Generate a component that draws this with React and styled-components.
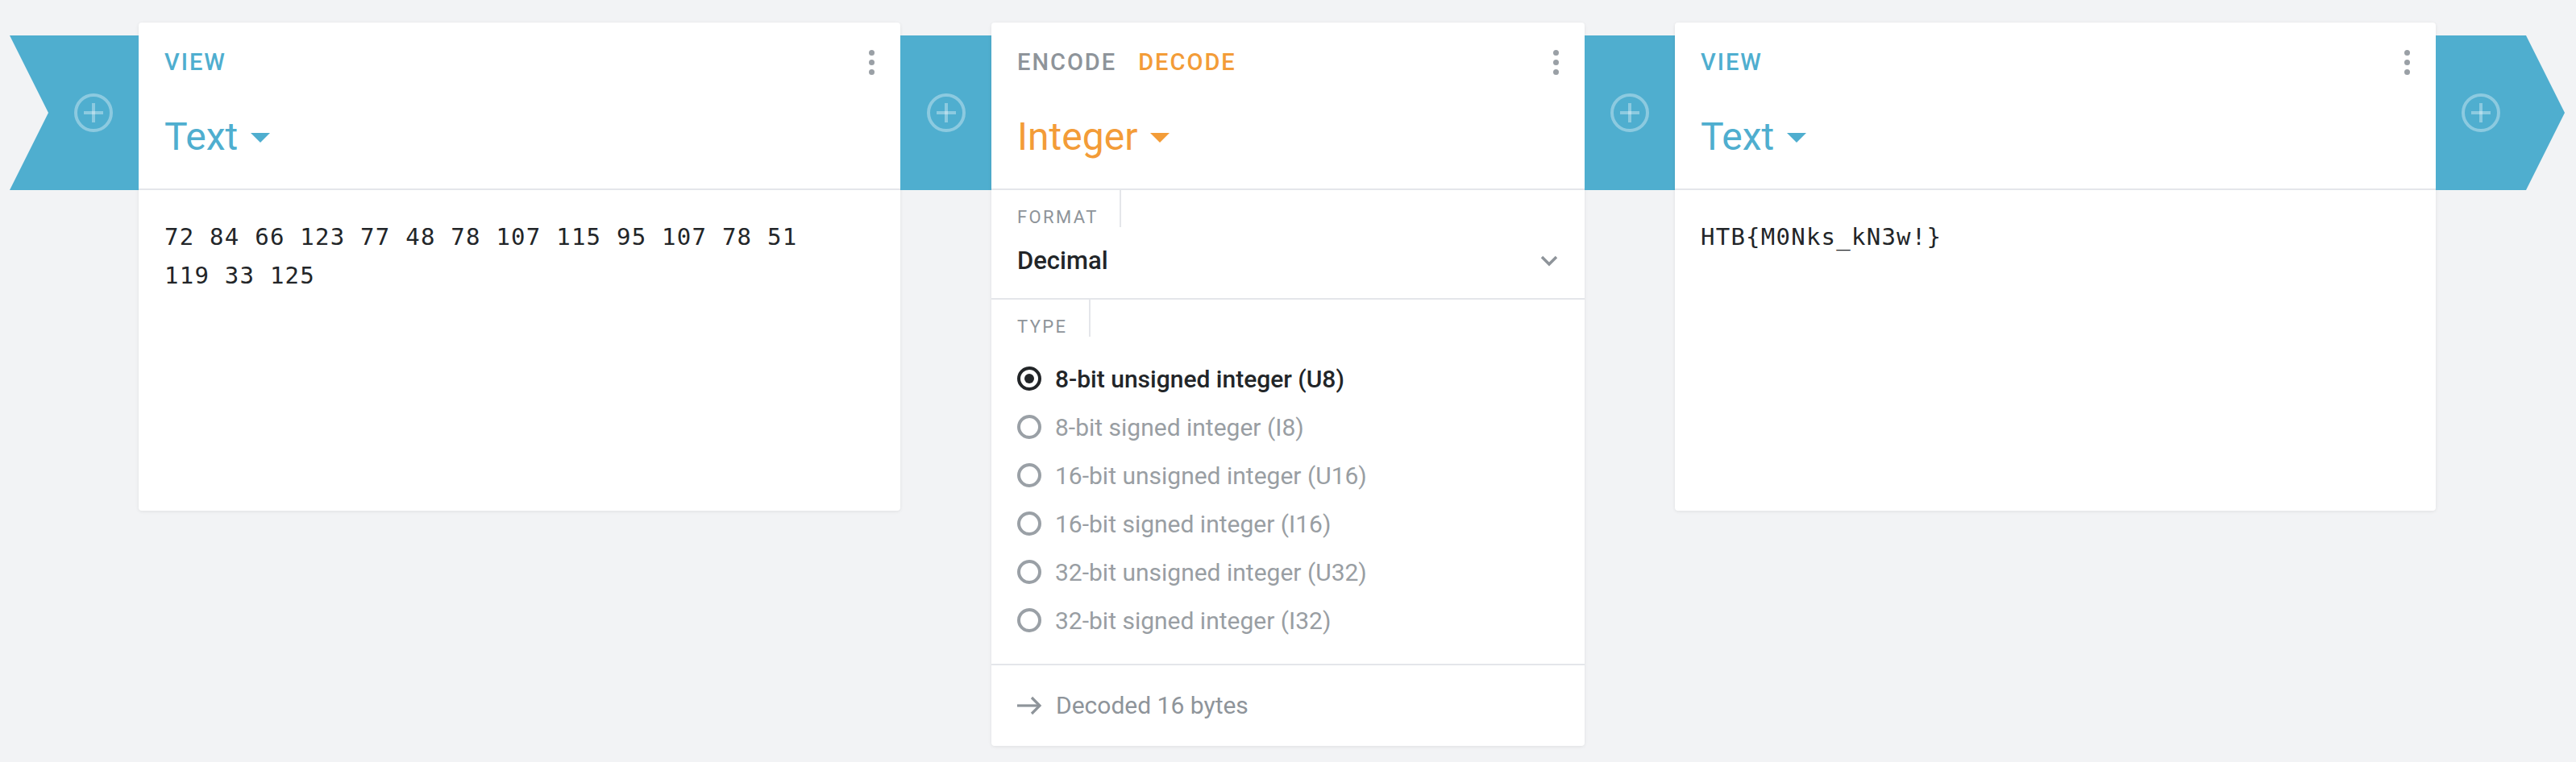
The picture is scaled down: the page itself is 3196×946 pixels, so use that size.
import React from 'react';
import styled, { createGlobalStyle } from 'styled-components';

const BLUE = '#4faecf';
const ORANGE = '#f39c38';
const GREY = '#8e949a';
const DARK = '#222528';
const LINE = '#e4e6ea';

const GlobalStyle = createGlobalStyle`
    html, body {
        margin: 0;
        padding: 0;
        background: #f2f3f5;
    }
    body {
        font-family: Roboto, "Noto Sans", Arial, sans-serif;
        -webkit-font-smoothing: antialiased;
    }
`;

const Pipeline = styled.div`
    display: flex;
    align-items: flex-start;
    padding: 28px 0 0 12px;
    min-height: 946px;
    box-sizing: border-box;
`;

const Connector = styled.div`
    flex-shrink: 0;
    width: ${(p) => p.$width}px;
    height: 192px;
    margin-top: 16px;
    background: ${BLUE};
    display: flex;
    align-items: center;
    justify-content: center;
    box-sizing: border-box;
    padding-left: ${(p) => (p.$shape === 'start' ? 48 : 0)}px;
    padding-right: ${(p) => (p.$shape === 'end' ? 48 : 0)}px;
    clip-path: ${(p) =>
        p.$shape === 'start'
            ? 'polygon(0 0, 100% 0, 100% 100%, 0 100%, 48px 50%)'
            : p.$shape === 'end'
            ? 'polygon(0 0, 112px 0, 100% 50%, 112px 100%, 0 100%)'
            : 'none'};
`;

const Card = styled.div`
    flex-shrink: 0;
    width: ${(p) => p.$width}px;
    background: #ffffff;
    border-radius: 4px;
    box-shadow: 0 1px 4px rgba(0, 0, 0, 0.08);
    display: flex;
    flex-direction: column;
`;

const Header = styled.div`
    height: 206px;
    border-bottom: 2px solid ${LINE};
    padding: 31px 32px 0 32px;
    box-sizing: content-box;
    height: 175px;
`;

const HeaderTop = styled.div`
    display: flex;
    align-items: center;
    justify-content: space-between;
    height: 36px;
`;

const Modes = styled.div`
    display: flex;
    gap: 27px;
`;

const Mode = styled.span`
    font-size: 29px;
    line-height: 36px;
    font-weight: 500;
    letter-spacing: 2px;
    color: ${(p) => p.$color};
`;

const Kebab = styled.div`
    display: flex;
    flex-direction: column;
    gap: 5px;
    span {
        width: 7px;
        height: 7px;
        border-radius: 50%;
        background: #9aa0a6;
    }
`;

const Title = styled.div`
    margin-top: 47px;
    display: flex;
    align-items: center;
    gap: 16px;
    font-size: 48px;
    line-height: 56px;
    color: ${(p) => p.$color};
`;

const Caret = styled.span`
    width: 0;
    height: 0;
    border-left: 12px solid transparent;
    border-right: 12px solid transparent;
    border-top: 12px solid currentColor;
    margin-top: 2px;
`;

const Content = styled.div`
    min-height: 398px;
    box-sizing: border-box;
    padding: 34px 64px 32px 32px;
    font-family: "DejaVu Sans Mono", "Liberation Mono", monospace;
    font-size: 29px;
    letter-spacing: 1.24px;
    line-height: 48px;
    color: ${DARK};
    word-wrap: break-word;
`;

const Field = styled.div`
    padding: 0 32px;
    border-bottom: 2px solid ${LINE};
    height: ${(p) => p.$height}px;
    box-sizing: content-box;
`;

const FieldLabel = styled.div`
    display: inline-block;
    padding: 22px 26px 0 0;
    border-right: 2px solid ${LINE};
    font-size: 22px;
    line-height: 24px;
    letter-spacing: 2.4px;
    color: ${GREY};
`;

const SelectRow = styled.div`
    margin-top: 22px;
    display: flex;
    align-items: center;
    justify-content: space-between;
    font-size: 31px;
    line-height: 40px;
    font-weight: 500;
    color: ${DARK};
    svg {
        margin-right: 1px;
    }
`;

const RadioList = styled.div`
    margin-top: 22px;
    display: flex;
    flex-direction: column;
`;

const RadioRow = styled.label`
    display: flex;
    align-items: center;
    gap: 17px;
    height: 60px;
    font-size: 30px;
    font-weight: ${(p) => (p.$checked ? 500 : 400)};
    color: ${(p) => (p.$checked ? DARK : '#999ea3')};
`;

const RadioMark = styled.span`
    width: 30px;
    height: 30px;
    box-sizing: border-box;
    border-radius: 50%;
    border: 4px solid ${(p) => (p.$checked ? DARK : '#9aa0a6')};
    display: flex;
    align-items: center;
    justify-content: center;
    &::after {
        content: '';
        width: 12px;
        height: 12px;
        border-radius: 50%;
        background: ${DARK};
        display: ${(p) => (p.$checked ? 'block' : 'none')};
    }
`;

const Status = styled.div`
    display: flex;
    align-items: center;
    gap: 17px;
    padding: 30px 32px;
    font-size: 30px;
    line-height: 40px;
    color: ${GREY};
`;

const PlusIcon = () => (
    <svg width="48" height="48" viewBox="0 0 48 48" fill="none" stroke="rgba(255,255,255,0.35)" strokeWidth="4">
        <circle cx="24" cy="24" r="22" />
        <line x1="12" y1="24" x2="36" y2="24" />
        <line x1="24" y1="12" x2="24" y2="36" />
    </svg>
);

const Chevron = () => (
    <svg width="22" height="14" viewBox="0 0 22 14" fill="none" stroke="#8e949a" strokeWidth="3.5">
        <polyline points="2,2 11,11 20,2" />
    </svg>
);

const Arrow = () => (
    <svg width="31" height="24" viewBox="0 0 31 24" fill="none" stroke="#8e949a" strokeWidth="3.2">
        <line x1="0" y1="12" x2="28" y2="12" />
        <polyline points="18,2 28,12 18,22" />
    </svg>
);

const Menu = () => (
    <Kebab>
        <span />
        <span />
        <span />
    </Kebab>
);

const types = [
    '8-bit unsigned integer (U8)',
    '8-bit signed integer (I8)',
    '16-bit unsigned integer (U16)',
    '16-bit signed integer (I16)',
    '32-bit unsigned integer (U32)',
    '32-bit signed integer (I32)',
];

const App = () => {
    return (
        <>
            <GlobalStyle />
            <Pipeline>
                <Connector $shape="start" $width={160}>
                    <PlusIcon />
                </Connector>

                <Card $width={945}>
                    <Header>
                        <HeaderTop>
                            <Mode $color={BLUE}>VIEW</Mode>
                            <Menu />
                        </HeaderTop>
                        <Title $color={BLUE}>
                            Text <Caret />
                        </Title>
                    </Header>
                    <Content>72 84 66 123 77 48 78 107 115 95 107 78 51 119 33 125</Content>
                </Card>

                <Connector $width={113}>
                    <PlusIcon />
                </Connector>

                <Card $width={736}>
                    <Header>
                        <HeaderTop>
                            <Modes>
                                <Mode $color={GREY}>ENCODE</Mode>
                                <Mode $color={ORANGE}>DECODE</Mode>
                            </Modes>
                            <Menu />
                        </HeaderTop>
                        <Title $color={ORANGE}>
                            Integer <Caret />
                        </Title>
                    </Header>
                    <Field $height={134}>
                        <FieldLabel>FORMAT</FieldLabel>
                        <SelectRow>
                            Decimal
                            <Chevron />
                        </SelectRow>
                    </Field>
                    <Field $height={452}>
                        <FieldLabel>TYPE</FieldLabel>
                        <RadioList>
                            {types.map((t, i) => (
                                <RadioRow key={t} $checked={i === 0}>
                                    <RadioMark $checked={i === 0} />
                                    {t}
                                </RadioRow>
                            ))}
                        </RadioList>
                    </Field>
                    <Status>
                        <Arrow />
                        Decoded 16 bytes
                    </Status>
                </Card>

                <Connector $width={112}>
                    <PlusIcon />
                </Connector>

                <Card $width={944}>
                    <Header>
                        <HeaderTop>
                            <Mode $color={BLUE}>VIEW</Mode>
                            <Menu />
                        </HeaderTop>
                        <Title $color={BLUE}>
                            Text <Caret />
                        </Title>
                    </Header>
                    <Content>HTB{'{'}M0Nks_kN3w!{'}'}</Content>
                </Card>

                <Connector $shape="end" $width={160}>
                    <PlusIcon />
                </Connector>
            </Pipeline>
        </>
    );
};

export default App;
